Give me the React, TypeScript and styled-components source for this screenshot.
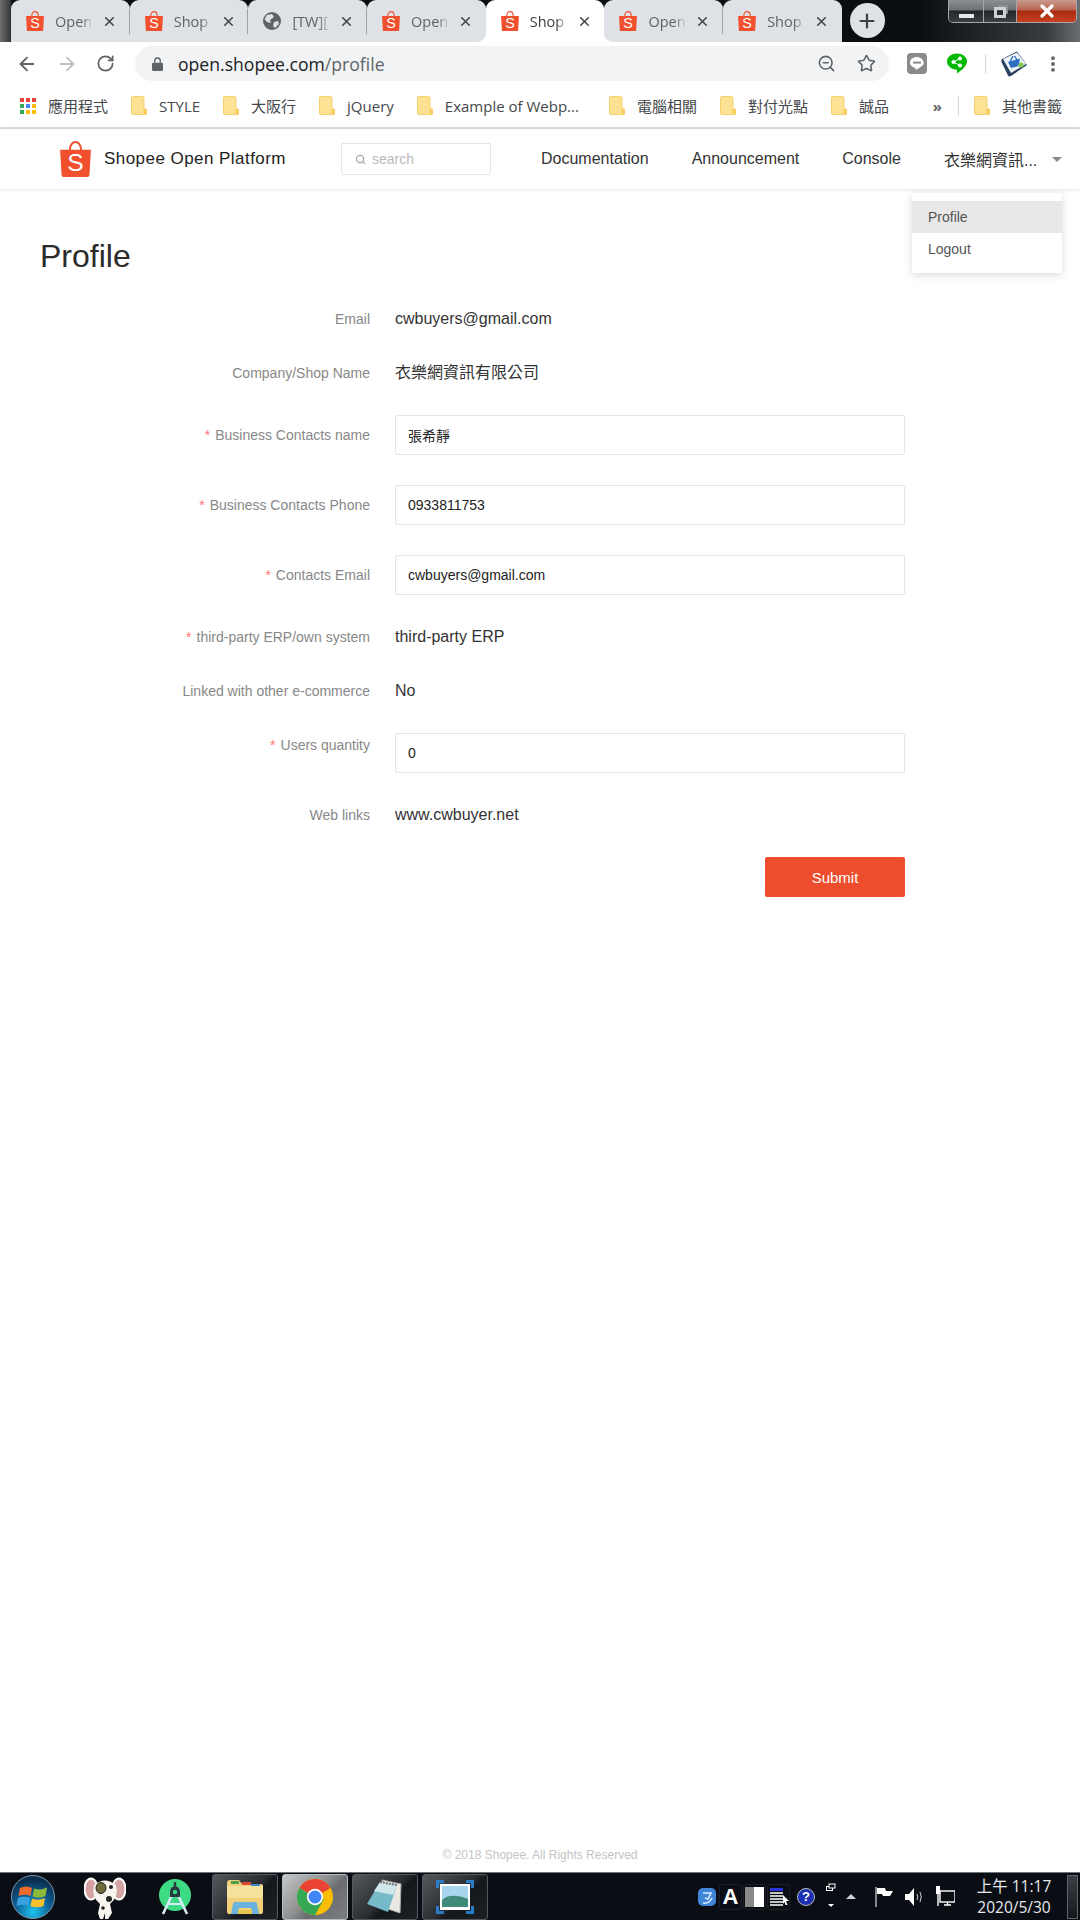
import styled, { createGlobalStyle } from "styled-components";
import { ArrowLeft, ArrowRight, MoreVertical, Plus, RotateCw, Search, Star, X, ZoomOut } from "lucide-react";

const GlobalStyle = createGlobalStyle`
  html, body {
    margin: 0;
    padding: 0;
    background: #fff;
    overflow: hidden;
  }
  body {
    font-family: "Liberation Sans", "Noto Sans CJK TC", Arial, sans-serif;
  }
  * {
    box-sizing: border-box;
  }
`;

const chromeFont = `"Open Sans", "Noto Sans CJK TC", sans-serif`;

function ShopeeBag({ size = 18 }: { size?: number }) {
  return (
    <svg width={size} height={size * 1.16} viewBox="0 0 30 35">
      <path d="M9.5 9 C9.5 -1.6 20.5 -1.6 20.5 9" fill="none" stroke="#f1502f" strokeWidth="2" />
      <path d="M0 8.5 H30 L28.6 33 Q28.5 35 26.5 35 H3.5 Q1.5 35 1.4 33 Z" fill="#f1502f" />
      <text x="15" y="29" fontSize="24" textAnchor="middle" fill="#fff" fontFamily="Liberation Sans">
        S
      </text>
    </svg>
  );
}

function Globe() {
  return (
    <svg width="18" height="18" viewBox="0 0 18 18">
      <circle cx="9" cy="9" r="9" fill="#5f6368" />
      <path d="M4 3 L9 2 L11 5 L7 8 L8 11 L4 10 L1.5 7 Z M11 10 L15 9 L16 12 L12 16 L10 14 Z" fill="#dee1e6" />
    </svg>
  );
}

function Folder() {
  return (
    <svg width="16" height="19" viewBox="0 0 16 19">
      <path d="M1.5 0.5 H11.5 Q13 0.5 13 2 V13 H15.5 V18.5 H1.5 Q0.5 18.5 0.5 17 V1.5 Q0.5 0.5 1.5 0.5 Z" fill="#fde293" stroke="#f5d06c" />
      <rect x="12.5" y="13" width="3" height="5" rx="1" fill="#f7cd5e" />
    </svg>
  );
}

function AppsGrid() {
  const colors = ["#ea4335", "#ea4335", "#ea4335", "#34a853", "#4285f4", "#fbbc04", "#34a853", "#fbbc04", "#fbbc04"];
  return (
    <svg width="16" height="16" viewBox="0 0 16 16">
      {colors.map((c, i) => (
        <rect key={i} x={(i % 3) * 6} y={Math.floor(i / 3) * 6} width="4" height="4" fill={c} />
      ))}
    </svg>
  );
}

function LineIcon() {
  return (
    <svg width="20" height="21" viewBox="0 0 20 21">
      <rect width="20" height="21" rx="4" fill="#8a8a8a" />
      <path d="M10 4 C5.5 4 3 6.6 3 9.6 C3 12.4 5.4 14.4 8.6 14.9 L8.4 17 C11 16 15 13.6 16.4 11.6 C17.6 8 14.5 4 10 4 Z" fill="#fff" />
      <rect x="6" y="8.6" width="8" height="2" fill="#8a8a8a" />
    </svg>
  );
}

function ShareBubble() {
  return (
    <svg width="20" height="21" viewBox="0 0 20 21">
      <path d="M10 0.5 C15.5 0.5 20 3.8 20 8.6 C20 13 14 18 10 20.5 L10 16.8 C4.5 16.8 0 13.2 0 8.6 C0 3.8 4.5 0.5 10 0.5 Z" fill="#00b900" />
      <g fill="#fff" stroke="#fff" strokeWidth="1">
        <circle cx="6.5" cy="9" r="1.6" />
        <circle cx="13" cy="5.5" r="1.6" />
        <circle cx="13" cy="12.5" r="1.6" />
        <path d="M6.5 9 L13 5.5 M6.5 9 L13 12.5" fill="none" />
      </g>
    </svg>
  );
}

function BasketExtension() {
  return (
    <svg width="28" height="28" viewBox="0 0 28 28">
      <path d="M2 9 L17 1.5 L27 15 L11 26 Q9 27 8 25.5 L1.5 12 Q1 10 2 9 Z" fill="#27415f" />
      <path d="M3 9 L17 2.5 L26 14 L11 23 Z" fill="#eef3f7" />
      <path d="M8 12 L20 8.5 L18.5 16 L11 18 Z" fill="#2d6fc0" />
      <path d="M10 12 L13 6 M17 10 L14.5 6" stroke="#2d6fc0" strokeWidth="1.4" />
      <circle cx="21" cy="15" r="2.6" fill="#7ec850" />
    </svg>
  );
}

function WindowsOrb() {
  return (
    <svg width="44" height="44" viewBox="0 0 44 44">
      <defs>
        <radialGradient id="orb" cx="50%" cy="85%" r="75%">
          <stop offset="0" stopColor="#1fc4ef" />
          <stop offset="0.55" stopColor="#0e5f96" />
          <stop offset="1" stopColor="#0b2f4f" />
        </radialGradient>
      </defs>
      <circle cx="22" cy="22" r="21.5" fill="url(#orb)" stroke="#7d97ac" />
      <path d="M9 13 Q15 10 21 13 L19.5 21 Q14 18.5 7.5 21 Z" fill="#ef6a2d" />
      <path d="M23 13.5 Q29 16 36 12.5 L34.5 21 Q28 24 21.5 21.5 Z" fill="#8dba3a" />
      <path d="M7 23 Q13 20.5 19 23 L17.5 31 Q12 28.5 5.5 31 Z" fill="#3aa0e0" />
      <path d="M21 23.5 Q27 26 34 23 L32.5 31 Q26 33.5 19.5 31 Z" fill="#fac02d" />
    </svg>
  );
}

function MouseMascot() {
  return (
    <svg width="42" height="44" viewBox="0 0 42 44">
      <ellipse cx="7" cy="14" rx="6.5" ry="10.5" fill="#d5a3a3" stroke="#fff" strokeWidth="2" />
      <ellipse cx="35" cy="14" rx="6.5" ry="10.5" fill="#d5a3a3" stroke="#fff" strokeWidth="2" />
      <path d="M10 10 Q21 1 32 10 Q35 22 26 29 H16 Q7 22 10 10 Z" fill="#f7f5ee" />
      <ellipse cx="17" cy="13" rx="5" ry="5.5" fill="#6f6c3a" stroke="#222" />
      <circle cx="27" cy="12" r="2" fill="#222" />
      <circle cx="25" cy="24" r="3" fill="#222" />
      <path d="M16 29 H26 L28 38 L24 44 H21 L21 38 L19 44 H16 L14 38 Z" fill="#f7f5ee" />
      <circle cx="19" cy="33" r="1.8" fill="#222" />
    </svg>
  );
}

function AndroidStudio() {
  return (
    <svg width="32" height="36" viewBox="0 0 32 36">
      <circle cx="16" cy="16" r="16" fill="#3ddc84" />
      <path d="M4 35 L13 16 M28 35 L19 16" stroke="#d7e9f7" strokeWidth="2.6" />
      <path d="M10 25 H22" stroke="#d7e9f7" strokeWidth="2" />
      <path d="M11 13 A5 6 0 0 1 21 13 V18 H11 Z" fill="#263a3f" />
      <rect x="14.8" y="3" width="2.4" height="4" fill="#263a3f" />
      <circle cx="16" cy="13" r="2.2" fill="#3ddc84" />
    </svg>
  );
}

function ExplorerFolder() {
  return (
    <svg width="40" height="38" viewBox="0 0 40 38">
      <path d="M2 5 Q2 2 5 2 H14 L17 6 H36 Q38 6 38 8 V34 Q38 36 36 36 H4 Q2 36 2 34 Z" fill="#f0d078" />
      <rect x="6" y="3" width="8" height="3" fill="#4a9d4c" />
      <rect x="17" y="4" width="9" height="3" fill="#d84b3a" />
      <rect x="26" y="6" width="9" height="3" fill="#3d86c8" />
      <path d="M2 8 H38 V20 H2 Z" fill="#f7e29c" />
      <path d="M6 36 L8 26 Q8.5 24 10 24 H30 Q32 24 32 26 L34 36 H27 L26 30 H14 L13 36 Z" fill="#69b3dc" />
      <rect x="13" y="32" width="14" height="4" fill="#e6c64d" />
    </svg>
  );
}

function ChromeLogo() {
  return (
    <svg width="36" height="36" viewBox="0 0 36 36">
      <circle cx="18" cy="18" r="18" fill="#fbbc04" />
      <path d="M18 18 L2.4 9 A18 18 0 0 1 33.6 9 Z" fill="#ea4335" />
      <path d="M18 18 L2.4 9 A18 18 0 0 0 18 36 L27 20 Z" fill="#34a853" />
      <circle cx="18" cy="18" r="8.2" fill="#fff" />
      <circle cx="18" cy="18" r="6.5" fill="#4285f4" />
    </svg>
  );
}

function NotepadIcon() {
  return (
    <svg width="38" height="36" viewBox="0 0 38 36">
      <path d="M16 1 L35 5 L34 34 L22 30 Z" fill="#e9e9e2" stroke="#aaa" />
      <path d="M14 3 L31 6 L22 33 L1 25 Z" fill="#76b9c9" />
      <path d="M14 3 L31 6 L27 16 L8 12 Z" fill="#cfe6ea" />
      <path d="M14 3 L31 6" stroke="#777" strokeWidth="2" strokeDasharray="2 1" />
    </svg>
  );
}

function PhotoIcon() {
  return (
    <svg width="38" height="34" viewBox="0 0 38 34">
      <rect x="4" y="4" width="30" height="26" fill="#fff" />
      <rect x="6" y="6" width="26" height="21" fill="#a9d6ee" />
      <path d="M6 20 Q14 12 32 19 V27 H6 Z" fill="#3f8a78" />
      <path d="M0 8 V0 H8 V3 H3 V8 Z M30 0 H38 V8 H35 V3 H30 Z M0 26 H3 V31 H8 V34 H0 Z M35 26 H38 V34 H30 V31 H35 Z" fill="#2a7cc7" />
    </svg>
  );
}

const tabs = [
  { title: "Open", icon: "shopee" },
  { title: "Shop", icon: "shopee" },
  { title: "[TW][", icon: "globe" },
  { title: "Open", icon: "shopee" },
  { title: "Shop", icon: "shopee", active: true },
  { title: "Open", icon: "shopee" },
  { title: "Shop", icon: "shopee" },
];

const bookmarks = ["STYLE", "大阪行", "jQuery", "Example of Webp...", "電腦相關", "對付光點", "誠品"];

export default function App() {
  return (
    <Page>
      <GlobalStyle />
      <TitleBar>
        <TabStrip>
          {tabs.map((tab, i) => (
            <TabCell key={i} $nextActive={!!tabs[i + 1]?.active} $prevActive={!!tabs[i - 1]?.active}>
              <Tab
                $active={!!tab.active}
                $nextActive={!!tabs[i + 1]?.active}
                $prevActive={!!tabs[i - 1]?.active}
                $separator={i < tabs.length - 1 && !tab.active && !tabs[i + 1]?.active}
              >
                {tab.icon === "shopee" ? <ShopeeBag /> : <Globe />}
                <TabTitle $active={!!tab.active}>{tab.title}</TabTitle>
                <TabClose>
                  <X size={15} strokeWidth={2.6} />
                </TabClose>
              </Tab>
            </TabCell>
          ))}
          <NewTab>
            <Plus size={22} strokeWidth={2.4} />
          </NewTab>
        </TabStrip>
        <WindowButtons>
          <WindowButton $width={35}>
            <MinimizeBar />
          </WindowButton>
          <WindowButton $width={33}>
            <RestoreBox />
          </WindowButton>
          <CloseButton>
            <X size={20} strokeWidth={4} color="#fff" />
          </CloseButton>
        </WindowButtons>
      </TitleBar>

      <Toolbar>
        <NavArrow $left={16}>
          <ArrowLeft size={22} color="#5f6368" strokeWidth={2} />
        </NavArrow>
        <NavArrow $left={18}>
          <ArrowRight size={22} color="#bdc1c6" strokeWidth={2} />
        </NavArrow>
        <NavArrow $left={18}>
          <RotateCw size={19} color="#5f6368" strokeWidth={2.2} />
        </NavArrow>
        <UrlBar>
          <LockIcon viewBox="0 0 12 15">
            <path d="M3 6 V4 A3 3 0 0 1 9 4 V6" fill="none" stroke="#5f6368" strokeWidth="1.5" />
            <rect y="6" width="12" height="9" rx="1.2" fill="#5f6368" />
          </LockIcon>
          <UrlText>
            open.shopee.com<UrlPath>/profile</UrlPath>
          </UrlText>
          <UrlActions>
            <ZoomOut size={19} color="#5f6368" strokeWidth={2} />
            <Star size={19} color="#5f6368" strokeWidth={2} />
          </UrlActions>
        </UrlBar>
        <ExtSlot $left={18}>
          <LineIcon />
        </ExtSlot>
        <ExtSlot $left={20}>
          <ShareBubble />
        </ExtSlot>
        <ExtensionDivider />
        <ExtSlot $left={14}>
          <BasketExtension />
        </ExtSlot>
        <ExtSlot $left={15}>
          <MoreVertical size={20} color="#5f6368" strokeWidth={2.6} />
        </ExtSlot>
      </Toolbar>

      <BookmarkBar>
        <Bookmark>
          <AppsGrid />
          <span>應用程式</span>
        </Bookmark>
        {bookmarks.map((b) => (
          <Bookmark key={b} $after={b.endsWith("...") ? 7 : 0}>
            <Folder />
            <span>{b}</span>
          </Bookmark>
        ))}
        <Overflow>»</Overflow>
        <BookmarkDivider />
        <OtherBookmarks>
          <Folder />
          <span>其他書籤</span>
        </OtherBookmarks>
      </BookmarkBar>

      <Header>
        <Brand>
          <ShopeeBag size={31} />
          <BrandName>Shopee Open Platform</BrandName>
        </Brand>
        <SearchBox>
          <Search size={11} color="#aaa" strokeWidth={3} />
          <SearchInput placeholder="search" readOnly />
        </SearchBox>
        <Nav>
          <NavLink>Documentation</NavLink>
          <NavLink>Announcement</NavLink>
          <NavLink>Console</NavLink>
          <UserMenu>
            <UserName>衣樂網資訊...</UserName>
            <Caret />
            <Dropdown>
              <DropdownItem $selected>Profile</DropdownItem>
              <DropdownItem>Logout</DropdownItem>
            </Dropdown>
          </UserMenu>
        </Nav>
      </Header>

      <Main>
        <Title>Profile</Title>
        <Form>
          <Row>
            <Label>Email</Label>
            <Value>cwbuyers@gmail.com</Value>
          </Row>
          <Row>
            <Label>Company/Shop Name</Label>
            <Value>衣樂網資訊有限公司</Value>
          </Row>
          <Row>
            <Label>
              <Required>*</Required>Business Contacts name
            </Label>
            <TextInput value="張希靜" readOnly />
          </Row>
          <Row>
            <Label>
              <Required>*</Required>Business Contacts Phone
            </Label>
            <TextInput value="0933811753" readOnly />
          </Row>
          <Row>
            <Label>
              <Required>*</Required>Contacts Email
            </Label>
            <TextInput value="cwbuyers@gmail.com" readOnly />
          </Row>
          <Row>
            <Label>
              <Required>*</Required>third-party ERP/own system
            </Label>
            <Value>third-party ERP</Value>
          </Row>
          <Row>
            <Label>Linked with other e-commerce</Label>
            <Value>No</Value>
          </Row>
          <Row $top>
            <Label>
              <Required>*</Required>Users quantity
            </Label>
            <TextInput value="0" readOnly />
          </Row>
          <Row>
            <Label>Web links</Label>
            <Value>www.cwbuyer.net</Value>
          </Row>
          <SubmitRow>
            <SubmitButton type="button">Submit</SubmitButton>
          </SubmitRow>
        </Form>
      </Main>

      <Footer>© 2018 Shopee. All Rights Reserved</Footer>

      <Taskbar>
        <StartCell>
          <WindowsOrb />
        </StartCell>
        <PinnedCell>
          <MouseMascot />
        </PinnedCell>
        <PinnedCell>
          <AndroidStudio />
        </PinnedCell>
        <TaskButtons>
          <TaskButton>
            <ExplorerFolder />
          </TaskButton>
          <TaskButton $active>
            <ChromeLogo />
          </TaskButton>
          <TaskButton>
            <NotepadIcon />
          </TaskButton>
          <TaskButton>
            <PhotoIcon />
          </TaskButton>
        </TaskButtons>
        <Tray>
          <TrayBlue>
            <svg width="20" height="20" viewBox="0 0 20 20">
              <rect x="1" y="1" width="18" height="18" rx="5" fill="#3f86d8" />
              <path d="M6 6 H14 L11 12 L8 11 M6 16 Q12 17 15 11" fill="none" stroke="#dbe9ff" strokeWidth="1.6" />
            </svg>
          </TrayBlue>
          <ImeGroup>
            <ImeCell>
              <ImeLetter>A</ImeLetter>
            </ImeCell>
            <ImeCell>
              <ImeHalf />
            </ImeCell>
            <ImeCell>
              <svg width="20" height="20" viewBox="0 0 20 20">
                <rect x="1" y="1" width="13" height="3" fill="#2a35d8" />
                <path d="M1 6 H14 M1 9 H14 M1 12 H14 M1 15 H14 M1 18 H14" stroke="#fff" strokeWidth="1.6" />
                <path d="M14 8 L20 14 H17 L18.5 18 H16.5 L15.5 15 L14 17 Z" fill="#fff" />
              </svg>
            </ImeCell>
          </ImeGroup>
          <HelpBadge>?</HelpBadge>
          <TrayRestore>
            <svg width="10" height="28" viewBox="0 0 10 28">
              <rect x="0.5" y="3.5" width="6" height="4" fill="none" stroke="#fff" />
              <rect x="3" y="1" width="6" height="4" fill="#0a0e14" stroke="#fff" />
              <path d="M2 21 H8 L5 24 Z" fill="#fff" />
            </svg>
          </TrayRestore>
          <TrayUp />
          <TrayGlyph $left={19}>
            <svg width="18" height="22" viewBox="0 0 18 22">
              <path d="M1 1 V21" stroke="#fff" strokeWidth="1" />
              <path d="M2 2 H10 L11 5 H18 L15 10 H8 L7 8 H2 Z" fill="#fff" />
            </svg>
          </TrayGlyph>
          <TrayGlyph $left={12}>
            <svg width="20" height="20" viewBox="0 0 20 20">
              <path d="M0 7 H4 L9 1 V19 L4 13 H0 Z" fill="#fff" />
              <path d="M12 7 Q13.5 10 12 13 M15 5 Q17.5 10 15 15" fill="none" stroke="#cfd3d8" strokeWidth="1" />
            </svg>
          </TrayGlyph>
          <TrayGlyph $left={10}>
            <svg width="20" height="22" viewBox="0 0 20 22">
              <rect x="1" y="0" width="4" height="8" fill="#fff" />
              <rect x="5" y="5" width="15" height="11" fill="none" stroke="#fff" strokeWidth="1.4" />
              <path d="M9 19 H16 M12.5 16 V19 M3 8 V20" stroke="#fff" strokeWidth="1.4" />
            </svg>
          </TrayGlyph>
          <Clock>
            <ClockLine>上午 11:17</ClockLine>
            <ClockLine>2020/5/30</ClockLine>
          </Clock>
          <ShowDesktop />
        </Tray>
      </Taskbar>
    </Page>
  );
}

const Page = styled.div`
  display: flex;
  flex-direction: column;
  width: 1080px;
  height: 1920px;
  background: #fff;
`;

const TitleBar = styled.div`
  display: flex;
  justify-content: space-between;
  height: 42px;
  background: linear-gradient(90deg, #6d6f70 0, #3b3c3d 10px, #0a0d12 12px, #0a0d12 85%, #3a3d40 97%, #6b6e70 100%);
`;

const TabStrip = styled.div`
  display: flex;
  padding-left: 11px;
`;

const TabCell = styled.div<{ $nextActive: boolean; $prevActive: boolean }>`
  width: 118.7px;
  height: 42px;
  background: ${(p) => (p.$nextActive || p.$prevActive ? "linear-gradient(to top, #fff 10px, transparent 10px)" : "transparent")};
`;

const Tab = styled.div<{
  $active: boolean;
  $nextActive: boolean;
  $prevActive: boolean;
  $separator: boolean;
}>`
  position: relative;
  display: flex;
  align-items: center;
  height: 42px;
  padding-left: 15px;
  background: ${(p) => (p.$active ? "#fff" : "#dee1e6")};
  border-radius: 9px 9px ${(p) => (p.$nextActive ? "9px" : "0")} ${(p) => (p.$prevActive ? "9px" : "0")};

  &::after {
    content: "";
    display: ${(p) => (p.$separator ? "block" : "none")};
    position: absolute;
    right: 0;
    top: 9px;
    width: 1px;
    height: 25px;
    background: #9ea2a8;
  }
`;

const TabTitle = styled.span<{ $active: boolean }>`
  width: 39px;
  margin-left: 11px;
  white-space: nowrap;
  font-family: ${chromeFont};
  font-size: 14.5px;
  color: ${(p) => (p.$active ? "#3c4043" : "#5f6368")};
  mask-image: linear-gradient(90deg, #000 68%, transparent 100%);
`;

const TabClose = styled.span`
  display: flex;
  margin-left: 8px;
  color: #45484c;
`;

const NewTab = styled.div`
  display: flex;
  align-items: center;
  justify-content: center;
  width: 35px;
  height: 35px;
  margin: 3px 0 0 8px;
  border-radius: 50%;
  background: #dee1e6;
  color: #3c4043;
`;

const WindowButtons = styled.div`
  display: flex;
  height: 23px;
  margin-right: 3px;
  border: 1px solid #a4a8ad;
  border-top: none;
  border-radius: 0 0 5px 5px;
  overflow: hidden;
`;

const WindowButton = styled.div<{ $width: number }>`
  display: flex;
  align-items: center;
  justify-content: center;
  width: ${(p) => p.$width}px;
  border-right: 1px solid #a4a8ad;
  background: linear-gradient(180deg, #8c9094 0, #6d7074 45%, #23262a 50%, #3c4044 100%);
`;

const MinimizeBar = styled.span`
  display: block;
  width: 15px;
  height: 4px;
  margin-top: 9px;
  background: #e6e8ea;
`;

const RestoreBox = styled.span`
  display: block;
  width: 12px;
  height: 11px;
  margin-top: 3px;
  border: 3px solid #cfd2d5;
  box-shadow: 3px -3px 0 -1px #8d9094;
`;

const CloseButton = styled.div`
  display: flex;
  align-items: center;
  justify-content: center;
  width: 59px;
  background: linear-gradient(180deg, #c99a8f 0, #b96452 45%, #a92a10 50%, #c8401f 100%);
`;

const Toolbar = styled.div`
  display: flex;
  align-items: center;
  height: 43px;
  background: #fff;
`;

const NavArrow = styled.div<{ $left: number }>`
  display: flex;
  margin-left: ${(p) => p.$left}px;
`;

const UrlBar = styled.div`
  display: flex;
  align-items: center;
  width: 754px;
  height: 35px;
  margin-left: 20px;
  padding: 0 13px 0 17px;
  border-radius: 18px;
  background: #f1f3f4;
`;

const LockIcon = styled.svg`
  width: 11px;
  height: 14px;
`;

const UrlText = styled.span`
  margin-left: 15px;
  font-family: "Open Sans", sans-serif;
  font-size: 17.6px;
  color: #202124;
`;

const UrlPath = styled.span`
  color: #5f6368;
`;

const UrlActions = styled.div`
  display: flex;
  align-items: center;
  gap: 21px;
  margin-left: auto;
`;

const ExtSlot = styled.div<{ $left: number }>`
  display: flex;
  margin-left: ${(p) => p.$left}px;
`;

const ExtensionDivider = styled.span`
  width: 1px;
  height: 20px;
  margin-left: 18px;
  background: #d6d8da;
`;

const BookmarkBar = styled.div`
  display: flex;
  align-items: center;
  gap: 23px;
  height: 44px;
  padding: 0 18px 1px 20px;
  border-bottom: 2px solid #dadce0;
  font-family: ${chromeFont};
  font-size: 15px;
  color: #45484c;
`;

const Bookmark = styled.div<{ $after?: number }>`
  display: flex;
  align-items: center;
  gap: 12px;
  margin-right: ${(p) => p.$after ?? 0}px;
  white-space: nowrap;
`;

const Overflow = styled.span`
  margin-left: auto;
  font-size: 15px;
  font-weight: 700;
  color: #5f6368;
`;

const BookmarkDivider = styled.span`
  width: 1px;
  height: 20px;
  margin-left: -7px;
  background: #d6d8da;
`;

const OtherBookmarks = styled(Bookmark)`
  margin-left: -8px;
`;

const Header = styled.header`
  position: relative;
  display: flex;
  align-items: center;
  height: 60px;
  padding-left: 60px;
  background: #fff;
  box-shadow: 0 1px 4px rgba(0, 0, 0, 0.1);
`;

const Brand = styled.div`
  display: flex;
  align-items: center;
  gap: 13px;
  width: 281px;
`;

const BrandName = styled.span`
  font-size: 17px;
  letter-spacing: 0.45px;
  color: #222;
`;

const SearchBox = styled.div`
  display: flex;
  align-items: center;
  gap: 6px;
  width: 150px;
  height: 32px;
  padding-left: 13px;
  border: 1px solid #e5e5e5;
  border-radius: 2px;
`;

const SearchInput = styled.input`
  width: 110px;
  border: none;
  outline: none;
  padding: 0;
  font-family: inherit;
  font-size: 14px;

  &::placeholder {
    color: #bbb;
    opacity: 1;
  }
`;

const Nav = styled.nav`
  display: flex;
  align-items: center;
  gap: 43px;
  margin-left: 50px;
`;

const NavLink = styled.a`
  font-size: 16px;
  color: #333;
`;

const UserMenu = styled.div`
  position: relative;
  display: flex;
  align-items: center;
`;

const UserName = styled.span`
  width: 94px;
  font-size: 16px;
  white-space: nowrap;
  color: #333;
`;

const Caret = styled.span`
  margin-left: 14px;
  border-left: 5.5px solid transparent;
  border-right: 5.5px solid transparent;
  border-top: 5.5px solid #8a8a8a;
`;

const Dropdown = styled.div`
  position: absolute;
  top: 46px;
  right: 0;
  width: 150px;
  padding: 8px 0;
  background: #fff;
  border-radius: 2px;
  box-shadow: 0 2px 8px rgba(0, 0, 0, 0.15);
`;

const DropdownItem = styled.div<{ $selected?: boolean }>`
  height: 32px;
  padding-left: 16px;
  font-size: 14px;
  line-height: 32px;
  color: #555;
  background: ${(p) => (p.$selected ? "#e8e8e8" : "transparent")};
`;

const Main = styled.main`
  flex: 1;
  padding: 49px 0 0 40px;
`;

const Title = styled.h1`
  margin: 0 0 32px;
  font-size: 32px;
  font-weight: 400;
  line-height: 37px;
  color: #2b2b2b;
`;

const Form = styled.form`
  display: flex;
  flex-direction: column;
  gap: 30px;
  width: 865px;
`;

const Row = styled.div<{ $top?: boolean }>`
  display: flex;
  align-items: ${(p) => (p.$top ? "flex-start" : "center")};
  gap: 25px;
  min-height: 24px;
`;

const Label = styled.label`
  flex: 0 0 330px;
  font-size: 14px;
  line-height: 24px;
  text-align: right;
  color: #888;
`;

const Required = styled.span`
  margin-right: 5px;
  color: #f77;
`;

const Value = styled.span`
  font-size: 16px;
  line-height: 24px;
  color: #333;
`;

const TextInput = styled.input`
  width: 510px;
  height: 40px;
  padding: 0 12px;
  border: 1px solid #e5e5e5;
  border-radius: 2px;
  outline: none;
  font-family: inherit;
  font-size: 14px;
  color: #222;
`;

const SubmitRow = styled.div`
  display: flex;
  justify-content: flex-end;
`;

const SubmitButton = styled.button`
  width: 140px;
  height: 40px;
  border: none;
  border-radius: 2px;
  background: #ee4d2d;
  font-family: inherit;
  font-size: 15px;
  color: #fff;
`;

const Footer = styled.footer`
  height: 34px;
  font-size: 12px;
  line-height: 34px;
  text-align: center;
  color: #c4c4c4;
`;

const Taskbar = styled.div`
  display: flex;
  align-items: center;
  height: 48px;
  border-top: 1px solid #6d7378;
  background: #0a0e14;
`;

const StartCell = styled.div`
  display: flex;
  width: 70px;
  padding-left: 11px;
`;

const PinnedCell = styled.div`
  display: flex;
  justify-content: center;
  width: 70px;
`;

const TaskButtons = styled.div`
  display: flex;
  gap: 4.5px;
  margin-left: 2px;
`;

const TaskButton = styled.div<{ $active?: boolean }>`
  display: flex;
  align-items: center;
  justify-content: center;
  width: 65.5px;
  height: 46px;
  border: 1px solid ${(p) => (p.$active ? "#b8bcc0" : "#55595e")};
  border-radius: 3px;
  background: ${(p) =>
    p.$active
      ? "linear-gradient(135deg, #c4c6c8 0, #8d8f91 45%, #6b6d70 60%, #7b7d80 100%)"
      : "linear-gradient(135deg, #55585c 0, #2a2d31 50%, #14171b 60%, #1d2024 100%)"};
`;

const Tray = styled.div`
  display: flex;
  align-items: center;
  height: 100%;
  margin-left: auto;
  padding-right: 2px;
`;

const TrayBlue = styled.div`
  display: flex;
  width: 21px;
`;

const ImeGroup = styled.div`
  display: flex;
  gap: 1px;
  margin-left: 1px;
`;

const ImeCell = styled.div`
  display: flex;
  align-items: center;
  justify-content: center;
  width: 23px;
  height: 26px;
  border: 1px solid #1c2025;
  border-radius: 3px;
`;

const ImeLetter = styled.span`
  font-size: 22px;
  font-weight: 700;
  line-height: 1;
  color: #fff;
`;

const ImeHalf = styled.span`
  display: block;
  width: 19px;
  height: 20px;
  background: linear-gradient(90deg, #888 50%, #fff 50%);
`;

const HelpBadge = styled.div`
  width: 18px;
  height: 18px;
  margin-left: 7px;
  border-radius: 50%;
  border: 1px solid #bbb;
  background: #1c2fb0;
  font-size: 13px;
  font-weight: 700;
  line-height: 16px;
  text-align: center;
  color: #fff;
`;

const TrayRestore = styled.div`
  display: flex;
  margin-left: 11px;
`;

const TrayUp = styled.span`
  margin-left: 10px;
  border-left: 5px solid transparent;
  border-right: 5px solid transparent;
  border-bottom: 5px solid #d0d3d6;
`;

const TrayGlyph = styled.div<{ $left: number }>`
  display: flex;
  margin-left: ${(p) => p.$left}px;
`;

const Clock = styled.div`
  display: flex;
  flex-direction: column;
  gap: 3px;
  width: 76px;
  margin: 0 15px 0 21px;
  text-align: center;
`;

const ClockLine = styled.span`
  font-family: "Open Sans", "Noto Sans CJK TC", sans-serif;
  font-size: 15.5px;
  line-height: 18px;
  white-space: nowrap;
  color: #e6e8ea;
`;

const ShowDesktop = styled.div`
  width: 11px;
  height: 44px;
  border: 1px solid #62666b;
  background: linear-gradient(180deg, #3b3f44, #14171b);
`;
